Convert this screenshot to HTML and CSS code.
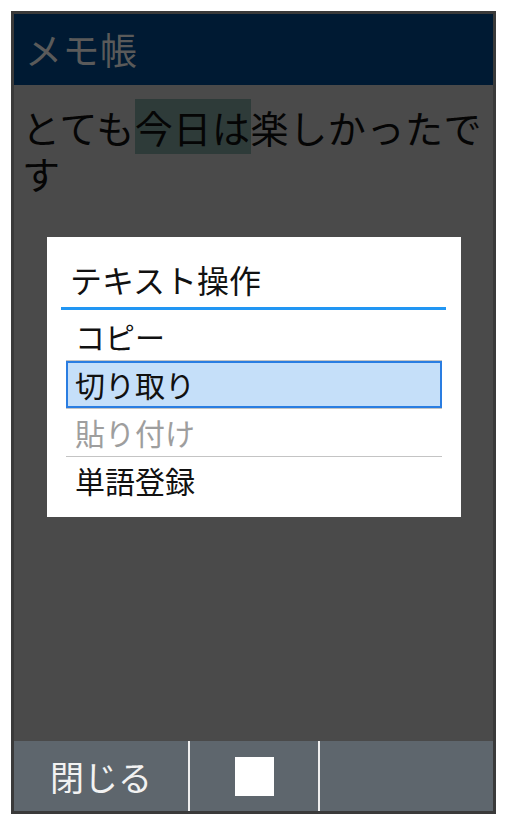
FILE: index.html
```html
<!DOCTYPE html>
<html lang="ja">
<head>
<meta charset="utf-8">
<title>メモ帳</title>
<link rel="stylesheet" href="styles.css">
</head>
<body>
<div class="phone">
  <header class="appbar">メモ帳</header>
  <main class="content">
    <p class="memo">とても<span class="sel">今日は</span>楽しかったです</p>
    <div class="dialog">
      <div class="dialog-title">テキスト操作</div>
      <div class="dialog-rule"></div>
      <ul class="menu">
        <li class="item">コピー</li>
        <li class="item selected">切り取り</li>
        <li class="item disabled">貼り付け</li>
        <li class="item last">単語登録</li>
      </ul>
    </div>
  </main>
  <footer class="softkeys">
    <div class="key key-left">閉じる</div>
    <div class="sep"></div>
    <div class="key key-center"><span class="square"></span></div>
    <div class="sep"></div>
    <div class="key key-right"></div>
  </footer>
</div>
</body>
</html>
```

FILE: styles.css
```css
html, body {
  margin: 0;
  padding: 0;
  background: #ffffff;
}
body {
  font-family: "Noto Sans CJK JP", "Noto Sans", sans-serif;
}
.phone {
  margin: 11px 0 0 11px;
  width: 479px;
  height: 797px;
  border: 3px solid #3a3a3a;
  display: flex;
  flex-direction: column;
  background: #4a4a4a;
}
.appbar {
  height: 71px;
  flex: none;
  background: #001a33;
  color: #5a5a5a;
  font-size: 37px;
  line-height: 71px;
  padding-left: 11px;
  letter-spacing: 0.5px;
  box-sizing: border-box;
}
.content {
  flex: 1;
  position: relative;
  background: #4a4a4a;
}
.memo {
  margin: 0;
  padding: 19px 6px 0 8px;
  font-size: 38px;
  line-height: 46px;
  letter-spacing: 0.6px;
  color: #050505;
}
.sel {
  background: #2e3b39;
}
.dialog {
  position: absolute;
  left: 33px;
  top: 152px;
  width: 414px;
  height: 280px;
  background: #ffffff;
  display: flex;
  flex-direction: column;
}
.dialog-title {
  height: 70px;
  box-sizing: border-box;
  padding: 22px 0 0 23px;
  font-size: 32px;
  line-height: 40px;
  color: #111111;
}
.dialog-rule {
  height: 3px;
  margin: 0 15px 0 14px;
  background: #2196f3;
}
.menu {
  list-style: none;
  margin: 0 19px;
  padding: 3px 0 0 0;
}
.item {
  height: 47px;
  line-height: 47px;
  font-size: 30px;
  padding-left: 9px;
  color: #111111;
  border-bottom: 1px solid #c4c4c4;
}
.item.last {
  border-bottom: none;
}
.item.selected {
  background: #c5dff9;
  box-shadow: inset 0 0 0 2px #2a7de1;
}
.item.disabled {
  color: #9e9e9e;
}
.softkeys {
  height: 70px;
  flex: none;
  display: flex;
  background: #5e666d;
}
.key {
  display: flex;
  align-items: center;
  justify-content: center;
}
.key-left {
  width: 174px;
  color: #f2f2f2;
  font-size: 34px;
}
.key-center {
  width: 128px;
}
.key-right {
  flex: 1;
}
.sep {
  width: 2px;
  background: #eeeeee;
}
.square {
  display: block;
  width: 39px;
  height: 39px;
  background: #ffffff;
}
```
